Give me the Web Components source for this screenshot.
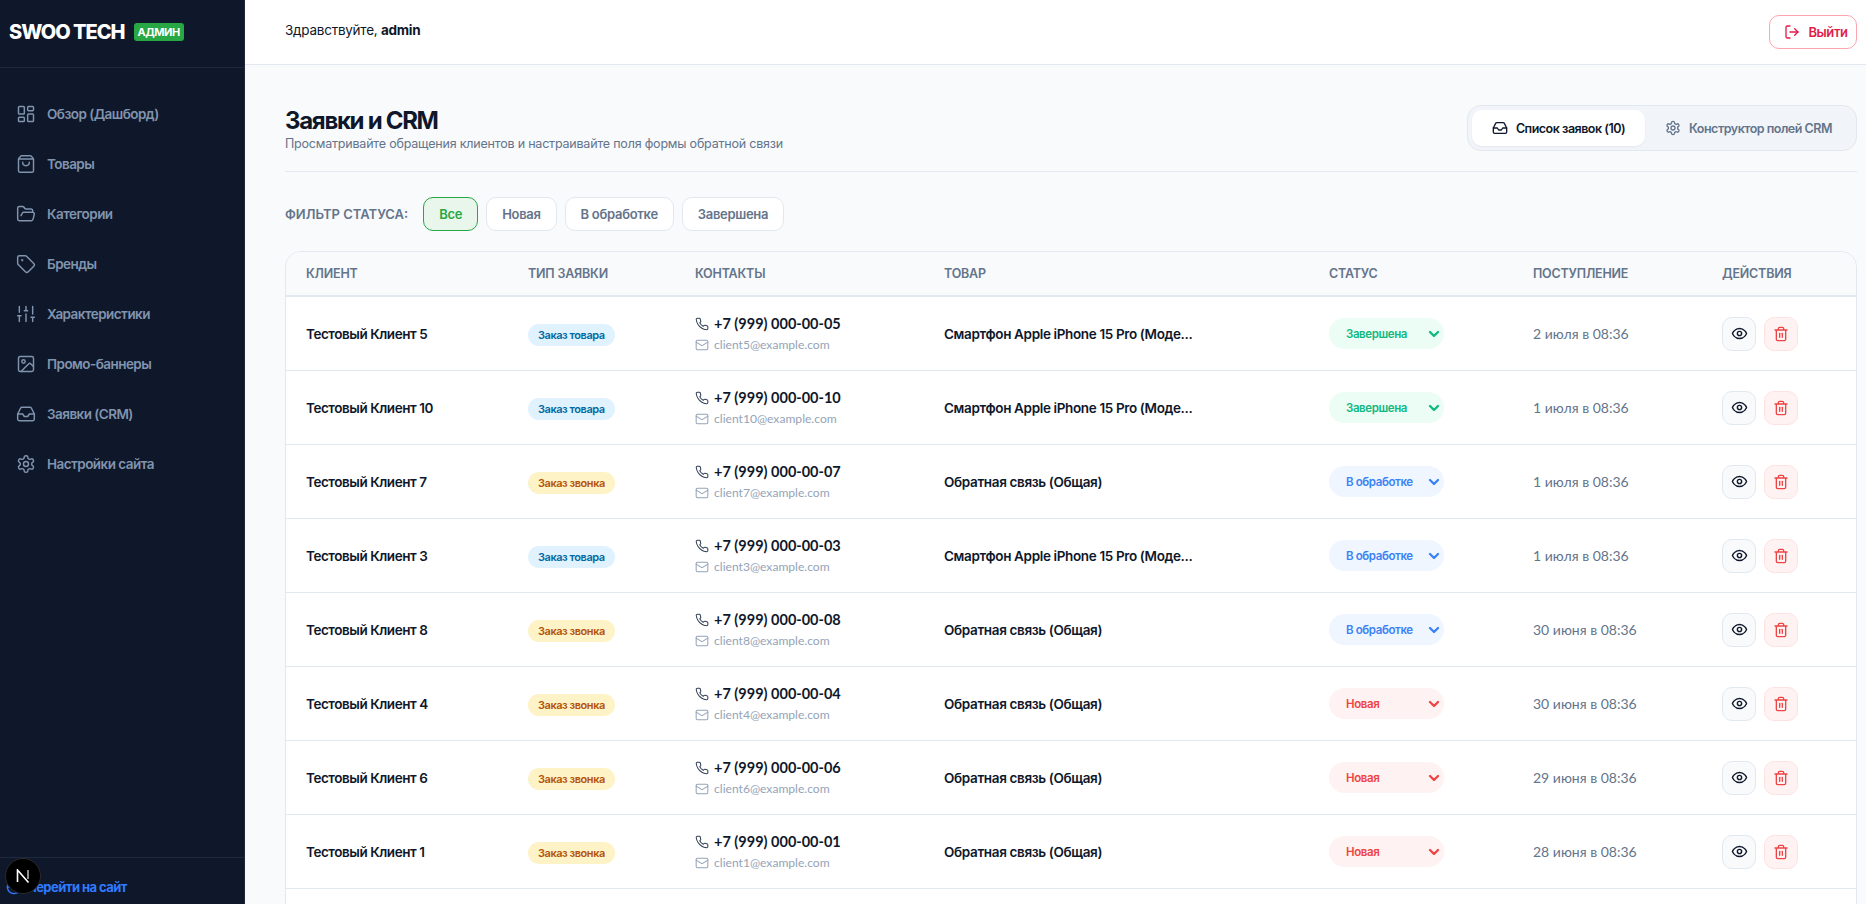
<!DOCTYPE html>
<html lang="ru">
<head>
<meta charset="utf-8">
<title>Заявки и CRM</title>
<style>
    html, body { margin: 0; height: 100%; overflow: hidden; }
    body { font-family: Inter, "Noto Sans", sans-serif; color: #0f172a; background: #f8fafc; }
</style>
</head>
<body>
<swoo-app></swoo-app>

<script>
const ICONS = {
    dashboard: '<rect x="3" y="3" width="7" height="9" rx="1"/><rect x="14" y="3" width="7" height="5" rx="1"/><rect x="14" y="12" width="7" height="9" rx="1"/><rect x="3" y="16" width="7" height="5" rx="1"/>',
    bag: '<path d="M16 10a4 4 0 0 1-8 0"/><path d="M3.103 6.034h17.794"/><path d="M3.4 5.467a2 2 0 0 0-.4 1.2V20a2 2 0 0 0 2 2h14a2 2 0 0 0 2-2V6.667a2 2 0 0 0-.4-1.2l-2-2.667A2 2 0 0 0 17 2H7a2 2 0 0 0-1.6.8z"/>',
    folder: '<path d="m6 14 1.5-2.9A2 2 0 0 1 9.24 10H20a2 2 0 0 1 1.94 2.5l-1.54 6a2 2 0 0 1-1.95 1.5H4a2 2 0 0 1-2-2V5a2 2 0 0 1 2-2h3.9a2 2 0 0 1 1.69.9l.81 1.2a2 2 0 0 0 1.67.9H18a2 2 0 0 1 2 2v2"/>',
    tag: '<path d="M12.586 2.586A2 2 0 0 0 11.172 2H4a2 2 0 0 0-2 2v7.172a2 2 0 0 0 .586 1.414l8.704 8.704a2.426 2.426 0 0 0 3.42 0l6.58-6.58a2.426 2.426 0 0 0 0-3.42z"/><circle cx="7.5" cy="7.5" r=".5" fill="currentColor"/>',
    sliders: '<path d="M4 21v-7M4 10V3M12 21v-9M12 8V3M20 21v-5M20 12V3M2 14h4M10 8h4M18 16h4"/>',
    image: '<rect x="3" y="3" width="18" height="18" rx="2"/><circle cx="9" cy="9" r="2"/><path d="m21 15-3.086-3.086a2 2 0 0 0-2.828 0L6 21"/>',
    inbox: '<polyline points="22 12 16 12 14 15 10 15 8 12 2 12"/><path d="M5.45 5.11 2 12v6a2 2 0 0 0 2 2h16a2 2 0 0 0 2-2v-6l-3.45-6.89A2 2 0 0 0 16.76 4H7.24a2 2 0 0 0-1.79 1.11z"/>',
    settings: '<path d="M12.22 2h-.44a2 2 0 0 0-2 2v.18a2 2 0 0 1-1 1.73l-.43.25a2 2 0 0 1-2 0l-.15-.08a2 2 0 0 0-2.73.73l-.22.38a2 2 0 0 0 .73 2.73l.15.1a2 2 0 0 1 1 1.72v.51a2 2 0 0 1-1 1.74l-.15.09a2 2 0 0 0-.73 2.73l.22.38a2 2 0 0 0 2.73.73l.15-.08a2 2 0 0 1 2 0l.43.25a2 2 0 0 1 1 1.73V20a2 2 0 0 0 2 2h.44a2 2 0 0 0 2-2v-.18a2 2 0 0 1 1-1.73l.43-.25a2 2 0 0 1 2 0l.15.08a2 2 0 0 0 2.73-.73l.22-.39a2 2 0 0 0-.73-2.73l-.15-.08a2 2 0 0 1-1-1.74v-.5a2 2 0 0 1 1-1.74l.15-.09a2 2 0 0 0 .73-2.73l-.22-.38a2 2 0 0 0-2.73-.73l-.15.08a2 2 0 0 1-2 0l-.43-.25a2 2 0 0 1-1-1.73V4a2 2 0 0 0-2-2z"/><circle cx="12" cy="12" r="3"/>',
    logout: '<path d="M9 21H5a2 2 0 0 1-2-2V5a2 2 0 0 1 2-2h4"/><polyline points="16 17 21 12 16 7"/><line x1="21" y1="12" x2="9" y2="12"/>',
    phone: '<path d="M22 16.92v3a2 2 0 0 1-2.18 2 19.79 19.79 0 0 1-8.63-3.07 19.5 19.5 0 0 1-6-6 19.79 19.79 0 0 1-3.07-8.67A2 2 0 0 1 4.11 2h3a2 2 0 0 1 2 1.72 12.84 12.84 0 0 0 .7 2.81 2 2 0 0 1-.45 2.11L8.09 9.91a16 16 0 0 0 6 6l1.27-1.27a2 2 0 0 1 2.11-.45 12.84 12.84 0 0 0 2.81.7A2 2 0 0 1 22 16.92z"/>',
    mail: '<rect x="2" y="4" width="20" height="16" rx="2"/><path d="m22 7-8.97 5.7a1.94 1.94 0 0 1-2.06 0L2 7"/>',
    eye: '<path d="M2 12s3-7 10-7 10 7 10 7-3 7-10 7-10-7-10-7Z"/><circle cx="12" cy="12" r="3"/>',
    trash: '<path d="M3 6h18M19 6v14c0 1-1 2-2 2H7c-1 0-2-1-2-2V6M8 6V4c0-1 1-2 2-2h4c1 0 2 1 2 2v2"/><line x1="10" y1="11" x2="10" y2="17"/><line x1="14" y1="11" x2="14" y2="17"/>',
    chevron: '<path d="m6 9 6 6 6-6"/>',
    globe: '<circle cx="12" cy="12" r="10"/><path d="M2 12h20"/>'
};

function icon(name, size, width = 2) {
    return `<svg width="${size}" height="${size}" viewBox="0 0 24 24" fill="none" stroke="currentColor" stroke-width="${width}" stroke-linecap="round" stroke-linejoin="round" aria-hidden="true">${ICONS[name]}</svg>`;
}

const NAV_ITEMS = [
    ['dashboard', 'Обзор (Дашборд)'],
    ['bag', 'Товары'],
    ['folder', 'Категории'],
    ['tag', 'Бренды'],
    ['sliders', 'Характеристики'],
    ['image', 'Промо-баннеры'],
    ['inbox', 'Заявки (CRM)'],
    ['settings', 'Настройки сайта']
];

const GOOD = 'Смартфон Apple iPhone 15 Pro (Моде...';
const FEEDBACK = 'Обратная связь (Общая)';
const ROWS = [
    ['Тестовый Клиент 5', 'good', '05', 'client5', GOOD, 'done', '2 июля в 08:36'],
    ['Тестовый Клиент 10', 'good', '10', 'client10', GOOD, 'done', '1 июля в 08:36'],
    ['Тестовый Клиент 7', 'call', '07', 'client7', FEEDBACK, 'work', '1 июля в 08:36'],
    ['Тестовый Клиент 3', 'good', '03', 'client3', GOOD, 'work', '1 июля в 08:36'],
    ['Тестовый Клиент 8', 'call', '08', 'client8', FEEDBACK, 'work', '30 июня в 08:36'],
    ['Тестовый Клиент 4', 'call', '04', 'client4', FEEDBACK, 'new', '30 июня в 08:36'],
    ['Тестовый Клиент 6', 'call', '06', 'client6', FEEDBACK, 'new', '29 июня в 08:36'],
    ['Тестовый Клиент 1', 'call', '01', 'client1', FEEDBACK, 'new', '28 июня в 08:36']
];

class SwooApp extends HTMLElement {
    connectedCallback() {
        this.shadow = this.attachShadow({mode: 'open'});
        this.shadow.innerHTML = `
        <style>
            :host { display: flex; height: 904px; overflow: hidden; }
            main { flex: 1; min-width: 0; display: flex; flex-direction: column; }
            .content { flex: 1; min-height: 0; padding: 40px 9px 0 40px; }
        </style>
        <side-bar></side-bar>
        <main>
            <top-bar></top-bar>
            <div class="content">
                <page-head></page-head>
                <status-filter></status-filter>
                <crm-table></crm-table>
            </div>
        </main>
        <next-badge></next-badge>
        `;
    }
}
customElements.define('swoo-app', SwooApp);

class SideBar extends HTMLElement {
    connectedCallback() {
        this.shadow = this.attachShadow({mode: 'open'});
        const items = NAV_ITEMS.map(item => `
            <a class="${item[0]}">${icon(item[0], 20, 1.75)}<span>${item[1]}</span></a>`).join('');
        this.shadow.innerHTML = `
        <style>
            :host { display: flex; flex-direction: column; width: 245px; flex: none; background: #0f172a; border-right: 1px solid #1e293b; box-sizing: border-box; }
            .logo { height: 68px; box-sizing: border-box; border-bottom: 1px solid #1e293b; display: flex; align-items: center; padding: 0 0 4px 9px; gap: 9px; }
            .logo b { font-size: 20px; font-weight: 800; letter-spacing: -1px; color: #fff; }
            .logo i { font-style: normal; font-size: 11px; font-weight: 700; color: #fff; background: #28a745; border-radius: 3px; padding: 0 4px; line-height: 18px; letter-spacing: -.5px; }
            nav { flex: 1; padding-top: 24px; display: flex; flex-direction: column; gap: 6px; }
            a { height: 44px; display: flex; align-items: center; gap: 11.5px; padding-left: 15.5px; color: #8094ae; font-size: 13.5px; font-weight: 600; letter-spacing: -.55px; }
            .foot { height: 47px; border-top: 1px solid #1e293b; display: flex; align-items: center; gap: 5px; padding: 12px 0 0 6px; box-sizing: border-box; color: #2f7bff; font-size: 13px; font-weight: 700; letter-spacing: -.55px; }
        </style>
        <div class="logo"><b>SWOO TECH</b><i>АДМИН</i></div>
        <nav>${items}</nav>
        <div class="foot">${icon('globe', 16)}<span>Перейти на сайт</span></div>
        `;
    }
}
customElements.define('side-bar', SideBar);

class TopBar extends HTMLElement {
    connectedCallback() {
        this.shadow = this.attachShadow({mode: 'open'});
        this.shadow.innerHTML = `
        <style>
            :host { display: flex; align-items: center; justify-content: space-between; height: 65px; box-sizing: border-box; flex: none; background: #fff; border-bottom: 1px solid #e2e8f0; padding: 0 9px 4px 40px; font-size: 13.5px; letter-spacing: -.25px; }
            b { font-weight: 700; }
            button { display: flex; align-items: center; gap: 8px; height: 34px; width: 88px; padding: 0 0 0 6px; justify-content: center; box-sizing: border-box; margin-top: 3px; font: 600 13px Inter, sans-serif; letter-spacing: -.4px; color: #e11d48; background: #fff; border: 1px solid #fda4af; border-radius: 10px; }
        </style>
        <div>Здравствуйте, <b>admin</b></div>
        <button>${icon('logout', 16)}<span>Выйти</span></button>
        `;
    }
}
customElements.define('top-bar', TopBar);

class PageHead extends HTMLElement {
    connectedCallback() {
        this.shadow = this.attachShadow({mode: 'open'});
        this.shadow.innerHTML = `
        <style>
            :host { display: flex; justify-content: space-between; align-items: flex-start; height: 66px; border-bottom: 1px solid #e2e8f0; }
            h1 { margin: 0; font-size: 24px; line-height: 31px; font-weight: 700; letter-spacing: -1.3px; color: #0f172a; }
            p { margin: 0; font-size: 12.5px; line-height: 16px; letter-spacing: -.2px; color: #64748b; }
            .tabs { display: flex; gap: 4px; padding: 4px; height: 46px; width: 390px; box-sizing: border-box; background: #f1f5f9; border: 1px solid #e2e8f0; border-radius: 14px; }
            .tab { display: flex; align-items: center; justify-content: center; gap: 8px; font-size: 12.5px; font-weight: 600; letter-spacing: -.5px; color: #64748b; border-radius: 10px; flex: 1; padding-right: 4px; }
            .on { flex: none; width: 173px; padding: 0; background: #fff; color: #0f172a; box-shadow: 0 1px 2px rgba(15,23,42,.05); }
        </style>
        <div><h1>Заявки и CRM</h1><p>Просматривайте обращения клиентов и настраивайте поля формы обратной связи</p></div>
        <div class="tabs">
            <div class="tab on">${icon('inbox', 16)}<span>Список заявок (10)</span></div>
            <div class="tab">${icon('settings', 16)}<span>Конструктор полей CRM</span></div>
        </div>
        `;
    }
}
customElements.define('page-head', PageHead);

class StatusFilter extends HTMLElement {
    connectedCallback() {
        this.shadow = this.attachShadow({mode: 'open'});
        this.shadow.innerHTML = `
        <style>
            :host { display: flex; align-items: center; gap: 8px; padding: 25px 0 20px; }
            span { font-size: 13px; font-weight: 600; color: #64748b; margin-right: 7px; letter-spacing: 0; }
            button { height: 34px; padding: 0 15px; font: 600 13px Inter, sans-serif; letter-spacing: -.3px; color: #64748b; background: #fff; border: 1px solid #e2e8f0; border-radius: 10px; }
            .on { color: #28a745; background: #e9f6ec; border-color: #28a745; }
        </style>
        <span>ФИЛЬТР СТАТУСА:</span>
        <button class="on">Все</button>
        <button>Новая</button>
        <button>В обработке</button>
        <button>Завершена</button>
        `;
    }
}
customElements.define('status-filter', StatusFilter);

class CrmTable extends HTMLElement {
    connectedCallback() {
        this.shadow = this.attachShadow({mode: 'open'});
        const heads = ['Клиент', 'Тип заявки', 'Контакты', 'Товар', 'Статус', 'Поступление', 'Действия'];
        this.shadow.innerHTML = `
        <style>
            :host { display: block; height: 700px; --cols: 222px 167px 249px 385px 204px 189px 1fr; background: #fff; border: 1px solid #e2e8f0; border-radius: 16px; overflow: hidden; }
            .head { display: grid; grid-template-columns: var(--cols); align-items: center; height: 43px; padding-left: 20px; background: #f8fafc; border-bottom: 2px solid #e2e8f0; font-size: 12.5px; font-weight: 600; letter-spacing: -.2px; text-transform: uppercase; color: #64748b; }
        </style>
        <div class="head">${heads.map(h => `<div>${h}</div>`).join('')}</div>
        <slot></slot>
        `;
        ROWS.forEach(data => {
            const row = document.createElement('crm-row');
            row.data = data;
            this.appendChild(row);
        });
    }
}
customElements.define('crm-table', CrmTable);

const TYPE_NAMES = { good: 'Заказ товара', call: 'Заказ звонка' };
const STATUS_NAMES = { done: 'Завершена', work: 'В обработке', 'new': 'Новая' };

class CrmRow extends HTMLElement {
    connectedCallback() {
        this.shadow = this.attachShadow({mode: 'open'});
        const [name, type, phone, mail, product, status, date] = this.data;
        this.shadow.innerHTML = `
        <style>
            :host { display: grid; grid-template-columns: var(--cols); align-items: center; height: 74px; box-sizing: border-box; padding-left: 20px; border-bottom: 1px solid #e2e8f0; font-size: 13.5px; }
            .name, .product { font-weight: 600; letter-spacing: -.45px; color: #0f172a; padding-top: 1px; }
            .product { letter-spacing: -.36px; white-space: nowrap; }
            .cell-type { display: flex; padding-top: 3px; }
            .type { font-size: 11px; font-weight: 600; letter-spacing: -.45px; line-height: 22px; padding: 0 10px; border-radius: 11px; }
            .good { color: #0369a1; background: #e0f2fe; }
            .call { color: #b45309; background: #fef3c7; }
            .phone, .mail { display: flex; align-items: center; gap: 5px; }
            .phone { font-family: Lato, Inter, sans-serif; font-weight: 700; font-size: 14.5px; line-height: 20px; color: #0f172a; }
            .phone svg { color: #334155; }
            .mail { margin-top: 3px; font-family: Lato, Inter, sans-serif; font-size: 12.1px; line-height: 16px; color: #94a3b8; }
            .status { display: flex; align-items: center; justify-content: space-between; width: 115px; height: 31px; box-sizing: border-box; padding: 0 2px 0 17px; border-radius: 16px; font-size: 11.5px; font-weight: 600; letter-spacing: -.4px; }
            .done { color: #10b981; background: #ecfdf5; }
            .work { color: #3b82f6; background: #eff6ff; }
            .new { color: #ef4444; background: #fef2f2; }
            .date { font-family: Lato, Inter, sans-serif; font-size: 14px; color: #64748b; }
            .acts { display: flex; gap: 8px; }
            button { width: 34px; height: 34px; padding: 0; display: flex; align-items: center; justify-content: center; border-radius: 10px; border: 1px solid #e2e8f0; background: #f8fafc; color: #0f172a; }
            button.del { color: #ef4444; background: #fef2f2; border-color: #fee2e2; }
        </style>
        <div class="name">${name}</div>
        <div class="cell-type"><span class="type ${type}">${TYPE_NAMES[type]}</span></div>
        <div>
            <div class="phone">${icon('phone', 14, 1.75)}<span>+7 (999) 000-00-${phone}</span></div>
            <div class="mail">${icon('mail', 14, 1.75)}<span>${mail}@example.com</span></div>
        </div>
        <div class="product">${product}</div>
        <div class="status ${status}"><span>${STATUS_NAMES[status]}</span>${icon('chevron', 16, 3.5)}</div>
        <div class="date">${date}</div>
        <div class="acts"><button>${icon('eye', 17)}</button><button class="del">${icon('trash', 16)}</button></div>
        `;
    }
}
customElements.define('crm-row', CrmRow);

// dev-tools badge, lies over the sidebar footer
class NextBadge extends HTMLElement {
    connectedCallback() {
        this.shadow = this.attachShadow({mode: 'open'});
        this.shadow.innerHTML = `
        <style>
            :host { position: absolute; left: 5px; top: 858px; width: 36px; height: 36px; box-sizing: border-box; border-radius: 50%; background: #000; border: 1px solid #2a2a2a; display: flex; align-items: center; justify-content: center; }
        </style>
        <svg width="14" height="14" viewBox="0 0 14 14" fill="none"><path d="M1.5 13V1L12.5 13.5" stroke="#fff" stroke-width="1.6"/><path d="M12 1v9" stroke="#ccc" stroke-width="1.4"/></svg>
        `;
    }
}
customElements.define('next-badge', NextBadge);
</script>
</body>
</html>
